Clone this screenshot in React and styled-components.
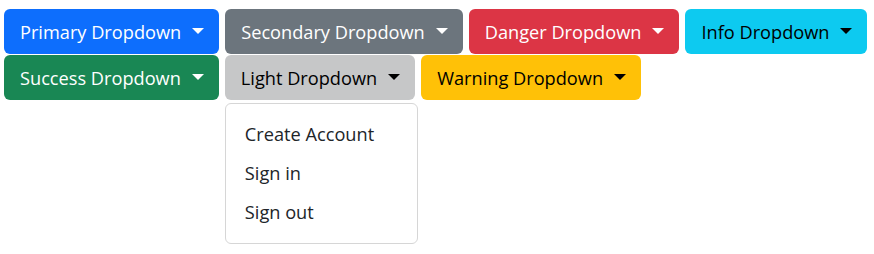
import React from 'react';
import styled, { createGlobalStyle } from 'styled-components';

const GlobalStyle = createGlobalStyle`
  html, body {
    margin: 0;
    background: #fff;
    font-family: 'Open Sans', 'Noto Sans', sans-serif;
  }
`;

const variants = {
  primary: { bg: '#0d6efd', fg: '#fff' },
  secondary: { bg: '#6c757d', fg: '#fff' },
  danger: { bg: '#dc3545', fg: '#fff' },
  info: { bg: '#0dcaf0', fg: '#000' },
  success: { bg: '#198754', fg: '#fff' },
  light: { bg: '#c6c7c8', fg: '#000' },
  warning: { bg: '#ffc107', fg: '#000' },
};

const Page = styled.div`
  min-height: 254px;
  box-sizing: border-box;
  padding: 9px 4px;
  display: flex;
  flex-direction: column;
  gap: 1px;
`;

const Row = styled.div`
  display: flex;
  gap: 6px;
`;

const Dropdown = styled.div`
  position: relative;
  flex-shrink: 0;
`;

const Toggle = styled.button`
  height: 45px;
  padding: 0 15px 0 16px;
  display: flex;
  align-items: center;
  gap: 11px;
  border: none;
  border-radius: 6px;
  white-space: nowrap;
  font-family: 'Open Sans', 'Noto Sans', sans-serif;
  font-size: 18.2px;
  background: ${(p) => variants[p.$variant].bg};
  color: ${(p) => variants[p.$variant].fg};
  cursor: pointer;
`;

const Caret = styled.span`
  width: 0;
  height: 0;
  border-left: 6px solid transparent;
  border-right: 6px solid transparent;
  border-top: 6px solid currentColor;
  margin-top: -2px;
`;

const Menu = styled.div`
  position: absolute;
  top: 48px;
  left: 0;
  z-index: 10;
  width: 193px;
  box-sizing: border-box;
  padding: 11px 0;
  background: #fff;
  border: 1px solid #d6d6d6;
  border-radius: 6px;
`;

const MenuItem = styled.a`
  display: block;
  padding: 0 19px;
  height: 39px;
  line-height: 39px;
  font-size: 18.2px;
  color: #212529;
  white-space: nowrap;
  text-decoration: none;
`;

function DropdownButton({ variant, label, open, children }) {
  return (
    <Dropdown>
      <Toggle $variant={variant}>
        {label}
        <Caret />
      </Toggle>
      {open && <Menu>{children}</Menu>}
    </Dropdown>
  );
}

export default function App() {
  return (
    <>
      <GlobalStyle />
      <Page>
        <Row>
          <DropdownButton variant="primary" label="Primary Dropdown" />
          <DropdownButton variant="secondary" label="Secondary Dropdown" />
          <DropdownButton variant="danger" label="Danger Dropdown" />
          <DropdownButton variant="info" label="Info Dropdown" />
        </Row>
        <Row>
          <DropdownButton variant="success" label="Success Dropdown" />
          <DropdownButton variant="light" label="Light Dropdown" open>
            <MenuItem href="#">Create Account</MenuItem>
            <MenuItem href="#">Sign in</MenuItem>
            <MenuItem href="#">Sign out</MenuItem>
          </DropdownButton>
          <DropdownButton variant="warning" label="Warning Dropdown" />
        </Row>
      </Page>
    </>
  );
}
